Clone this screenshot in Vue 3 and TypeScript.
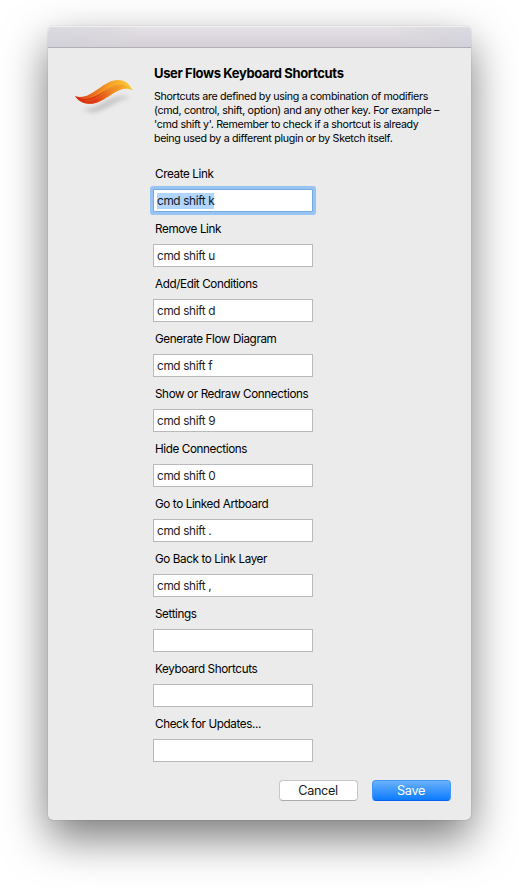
<script setup lang="ts">
import { ref } from 'vue'

interface Shortcut {
  label: string
  value: string
}

const shortcuts = ref<Shortcut[]>([
  { label: 'Create Link', value: 'cmd shift k' },
  { label: 'Remove Link', value: 'cmd shift u' },
  { label: 'Add/Edit Conditions', value: 'cmd shift d' },
  { label: 'Generate Flow Diagram', value: 'cmd shift f' },
  { label: 'Show or Redraw Connections', value: 'cmd shift 9' },
  { label: 'Hide Connections', value: 'cmd shift 0' },
  { label: 'Go to Linked Artboard', value: 'cmd shift .' },
  { label: 'Go Back to Link Layer', value: 'cmd shift ,' },
  { label: 'Settings', value: '' },
  { label: 'Keyboard Shortcuts', value: '' },
  { label: 'Check for Updates...', value: '' },
])

const active = ref(0)
</script>

<template>
  <main class="stage">
    <section class="window">
      <header class="titlebar"></header>
      <div class="content">
        <svg class="logo" width="62" height="40" viewBox="0 0 62 40">
          <defs>
            <linearGradient id="flame" x1="0" y1="0" x2="1" y2="0">
              <stop offset="0" stop-color="#d93a12" />
              <stop offset="0.3" stop-color="#ea6a1c" />
              <stop offset="0.6" stop-color="#f6a028" />
              <stop offset="1" stop-color="#fbd038" />
            </linearGradient>
            <linearGradient id="ember" x1="0" y1="0" x2="1" y2="0">
              <stop offset="0" stop-color="#d52a10" />
              <stop offset="0.35" stop-color="#dd3c14" />
              <stop offset="0.65" stop-color="#f08a24" />
              <stop offset="1" stop-color="#fbc42e" />
            </linearGradient>
            <filter id="soft" x="-30%" y="-60%" width="160%" height="220%">
              <feGaussianBlur stdDeviation="2" />
            </filter>
          </defs>
          <path class="shade" filter="url(#soft)" d="M9 31 C22 35 31 21 47 19 C52 18.500 55 20 58 22 C45 19 33 36 18 35.500 C14 35 12 33 9 31 Z" />
          <path fill="url(#flame)" d="M2 19.300 C19 24 29 3 45 3 C53 3 56.500 7.500 59.800 13.300 C45 5 34 27 16 26.800 C9 26.500 5 23 2 19.300 Z" />
          <path fill="url(#ember)" d="M2 19.300 C22 27 33 9 46 7.500 C52 7 56 9.500 59.800 13.300 C45 5 34 27 16 26.800 C9 26.500 5 23 2 19.300 Z" />
          <path class="streak" d="M8 21.500 C24 24 31 6 48 5.800 M12 24 C26 25 34 9 49 7.500" />
        </svg>
        <div class="form">
          <h1>User Flows Keyboard Shortcuts</h1>
          <p class="intro">
            <span class="line">Shortcuts are defined by using a combination of modifiers</span>
            <span class="line">(cmd, control, shift, option) and any other key. For example –</span>
            <span class="line">'cmd shift y'. Remember to check if a shortcut is already</span>
            <span class="line">being used by a different plugin or by Sketch itself.</span>
          </p>
          <div class="fields">
            <div v-for="(item, i) in shortcuts" :key="item.label" class="row">
              <div class="label">{{ item.label }}</div>
              <div class="field" :class="{ focused: i === active }" @click="active = i">
                <span class="value">{{ item.value }}</span>
              </div>
            </div>
          </div>
        </div>
      </div>
      <footer class="actions">
        <button type="button" class="btn cancel">Cancel</button>
        <button type="button" class="btn save">Save</button>
      </footer>
    </section>
  </main>
</template>

<style>
body {
  background: #fff;
  overflow: hidden;
}
</style>

<style scoped>
.stage {
  box-sizing: border-box;
  width: 519px;
  height: 894px;
  padding: 26px 48px 74px;
  overflow: hidden;
  font-family: Inter, "Liberation Sans", sans-serif;
  color: #000;
}
.window {
  display: flex;
  flex-direction: column;
  width: 423px;
  height: 794px;
  border-radius: 5px;
  background: #ebebeb;
  box-shadow: 0 0 1px rgba(0, 0, 0, 0.45), 0 18px 44px rgba(0, 0, 0, 0.53);
}
.titlebar {
  box-sizing: border-box;
  flex: none;
  height: 22px;
  border-bottom: 1px solid #b2aeb5;
  border-radius: 5px 5px 0 0;
  background:
    linear-gradient(90deg, rgba(208, 211, 219, 0.5), rgba(214, 214, 218, 0.5) 15%, transparent 24%, transparent 80%, rgba(214, 214, 218, 0.5) 88%, rgba(208, 211, 219, 0.5)),
    linear-gradient(#e7e3e9, #d4ced6);
  box-shadow: inset 0 1px #f2f0f3;
}
.content {
  display: flex;
  gap: 20px;
  padding: 16px 0 0 25px;
}
.logo {
  flex: none;
  margin-top: 13px;
}
.shade {
  fill: #c6c6c6;
}
.streak {
  fill: none;
  stroke: #fbc04a;
  stroke-opacity: 0.35;
  stroke-width: 0.6;
}
h1 {
  margin: 0 0 8px -1px;
  font-size: 13px;
  line-height: 18px;
  font-weight: 700;
  letter-spacing: -0.36px;
  white-space: nowrap;
}
.intro {
  margin: 0 0 0 -1px;
  font-size: 10.7px;
  line-height: 14px;
  letter-spacing: -0.33px;
}
.line {
  display: block;
  white-space: nowrap;
}
.fields {
  display: flex;
  flex-direction: column;
  gap: 9px;
  margin: 20px 0 0 -2px;
}
.row {
  height: 46px;
}
.label {
  height: 23px;
  padding-left: 2px;
  font-size: 11.7px;
  line-height: 16px;
  letter-spacing: -0.39px;
  white-space: nowrap;
}
.field {
  box-sizing: border-box;
  display: flex;
  align-items: center;
  width: 160px;
  height: 23px;
  padding-left: 3px;
  border: 1px solid #b9b9b9;
  background: #fff;
  font-size: 11.8px;
  line-height: 16px;
  letter-spacing: -0.35px;
}
.value {
  color: #222;
  white-space: pre;
}
.focused {
  border-color: #75a9e2;
  box-shadow: 0 0 0 3px #98c4f4;
  border-radius: 1px;
}
.focused .value {
  background: #b1d5fd;
  color: #10151c;
  line-height: 16px;
}
.actions {
  display: flex;
  justify-content: flex-end;
  gap: 14px;
  margin-top: auto;
  padding: 0 20px 19px 0;
}
.btn {
  box-sizing: border-box;
  width: 79px;
  height: 21px;
  padding: 0 1px 0 0;
  border-radius: 4px;
  font-family: inherit;
  font-size: 12.7px;
  line-height: 18px;
  letter-spacing: -0.35px;
}
.cancel {
  border: 1px solid #c6c6c6;
  border-bottom-color: #acacac;
  background: #fff;
  color: #1a1a1a;
}
.save {
  border: 1px solid #4197f8;
  border-bottom-color: #0762f0;
  background: linear-gradient(#69b1fa, #0d7bff);
  color: #fff;
}
</style>
